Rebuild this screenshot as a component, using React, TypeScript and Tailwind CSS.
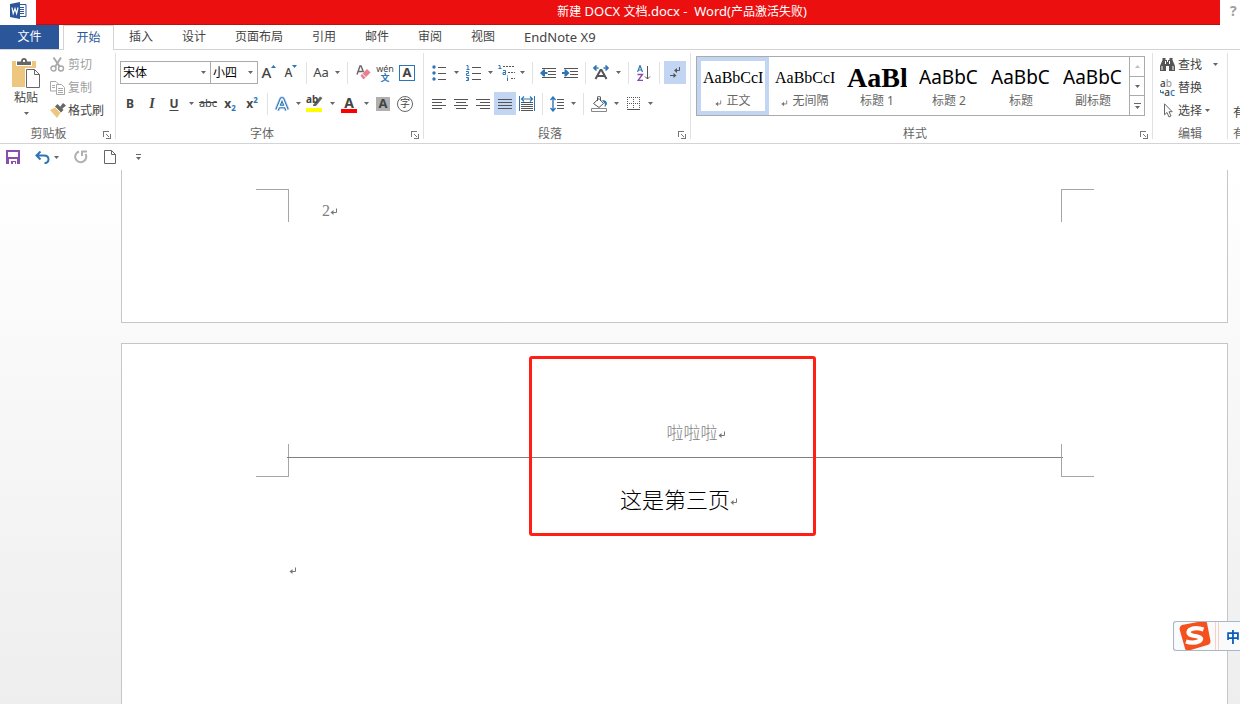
import React, { useState } from 'react';
import clsx from 'clsx';

const BLUE = '#2e75b6';
const INK = '#555555';

type StyleItem = { name: string; sample: string; sampleClass: string; mark?: boolean };

const TABS = ['插入', '设计', '页面布局', '引用', '邮件', '审阅', '视图'];

const SERIF = "font-['Liberation_Serif',serif] text-[16px]";
const SANS = "font-['Noto_Sans',sans-serif] text-[19px]";

const STYLES: StyleItem[] = [
  { name: '正文', sample: 'AaBbCcI', sampleClass: SERIF, mark: true },
  { name: '无间隔', sample: 'AaBbCcI', sampleClass: SERIF, mark: true },
  { name: '标题 1', sample: 'AaBl', sampleClass: "font-['Liberation_Serif',serif] text-[28px] font-bold" },
  { name: '标题 2', sample: 'AaBbC', sampleClass: SANS },
  { name: '标题', sample: 'AaBbC', sampleClass: SANS },
  { name: '副标题', sample: 'AaBbC', sampleClass: SANS },
];

const Caret = () => (
  <svg width="5" height="3" viewBox="0 0 5 3" className="shrink-0">
    <path d="M0 0h5L2.5 3z" fill="#666" />
  </svg>
);

const Btn = ({ label, on, wide = true, children }: { label: string; on?: boolean; wide?: boolean; children: React.ReactNode }) => (
  <button
    type="button"
    aria-label={label}
    className={clsx(
      'flex h-[23px] shrink-0 items-center justify-center hover:bg-[#d5e1f2]',
      wide ? 'w-[22px]' : 'w-5',
      on && 'bg-[#c2d5f2]'
    )}
  >
    {children}
  </button>
);

const Drop = ({ label }: { label: string }) => (
  <button type="button" aria-label={label} className="flex h-[23px] w-3 shrink-0 items-center justify-center hover:bg-[#d5e1f2]">
    <Caret />
  </button>
);

const Sep = () => <div className="mx-1 h-[22px] w-px shrink-0 bg-[#e1e1e1]" />;

const Launcher = ({ label }: { label: string }) => (
  <button type="button" aria-label={label} className="absolute right-1 bottom-0">
    <svg width="8" height="8" viewBox="0 0 8 8" fill="none" stroke="#777" shapeRendering="crispEdges">
      <path d="M0.5 6V0.5H6M3 3l3 3M7.5 3v4.5H3" />
    </svg>
  </button>
);

const Group = ({ title, launcher, className, children }: { title: string; launcher?: boolean; className: string; children: React.ReactNode }) => (
  <section className={clsx('flex shrink-0 flex-col border-r border-[#e1e1e1]', className)}>
    <div className="flex-1">{children}</div>
    <div className={clsx('relative h-4 text-center leading-[22px] text-[#666]', launcher && 'pr-[18px]')}>
      {title}
      {launcher && <Launcher label={title} />}
    </div>
  </section>
);

// paragraph end mark
const ParaMark = ({ className }: { className?: string }) => (
  <svg width="8" height="8" viewBox="0 0 8 8" fill="none" stroke="#777" className={clsx('inline-block shrink-0', className)}>
    <path d="M6.5 0.5v4H1" />
    <path d="M3.500 2L0.500 4.500L3.500 7z" fill="#777" stroke="none" />
  </svg>
);

const Lines = ({ rows }: { rows: [number, number][] }) => (
  <svg width="14" height="12" viewBox="0 0 14 12" stroke={INK} shapeRendering="crispEdges">
    {rows.map(([a, b], i) => (
      <path key={i} d={`M${a} ${i * 3 + 1.5}H${b}`} />
    ))}
  </svg>
);

const WordLogo = () => (
  <svg width="17" height="17" viewBox="0 0 17 17">
    <path d="M9 2.500h7v12H9z" fill="#fff" stroke="#2b579a" />
    <path d="M10 5.500h4M10 7.500h4M10 9.500h4M10 11.500h4" stroke="#2b579a" />
    <path d="M0 2l10-2v17L0 15z" fill="#2b579a" />
    <path d="M2 5.500l1.200 6L5 6.500l1.600 5L8 5.500" fill="none" stroke="#fff" strokeWidth="1.200" />
  </svg>
);

const PasteIcon = () => (
  <svg width="28" height="31" viewBox="0 0 28 31">
    <path d="M0 3h24v26H0z" fill="#edc77f" />
    <path d="M4 3h16v5H4z" fill="#fff" />
    <path d="M5 7V3.500h4Q9 0 12 0t3 3.500h4V7z" fill="#666" />
    <path d="M11 2h2v2h-2z" fill="#fff" />
    <path d="M13 10h11v20H13z" fill="#fff" />
    <path d="M14.500 11.500h8l5 5v13h-13z" fill="#fff" stroke="#666" />
    <path d="M22.500 11.500v5h5" fill="none" stroke="#666" />
  </svg>
);

const CutIcon = () => (
  <svg width="15" height="15" viewBox="0 0 15 15" fill="none" stroke="#a8a8a8">
    <path d="M3.500 0.500L10 10M11 0.500L5 10" strokeWidth="1.900" />
    <circle cx="3.500" cy="11.500" r="2.500" strokeWidth="1.400" />
    <circle cx="11" cy="11.500" r="2.500" strokeWidth="1.400" />
  </svg>
);

const CopyIcon = () => (
  <svg width="15" height="14" viewBox="0 0 15 14" fill="#fff" stroke="#a8a8a8">
    <path d="M0.500 0.500H6l2.500 2.500v7h-8z" />
    <path d="M2 4.500h3M2 6.500h3" />
    <path d="M6.500 3.500h5l3 3v7h-8z" />
    <path d="M8 7.500h5M8 9.500h5M8 11.500h5" />
  </svg>
);

const PainterIcon = () => (
  <svg width="16" height="15" viewBox="0 0 16 15">
    <path d="M0 7l6-3 5 5-4 6z" fill="#edc77f" />
    <path d="M5 3.500L7.500 1l6 6L11 9.500z" fill="#666" />
    <path d="M10 4l3-4 3 2.500-4 3.500z" fill="#666" />
    <path d="M5.500 4.500l5 5" stroke="#fff" />
  </svg>
);

const EraserIcon = () => (
  <svg width="15" height="15" viewBox="0 0 15 15">
    <path d="M1 9.500L4 1h1l2.500 6M2.500 6.500h4" fill="none" stroke="#666" strokeWidth="1.400" />
    <path d="M4.500 10.500L11 4l3.500 3.500L8 14H7z" fill="#e8808f" />
    <path d="M6 8.500l4 4" stroke="#fff" />
  </svg>
);

const HighlightIcon = () => (
  <svg width="18" height="17" viewBox="0 0 18 17">
    <path d="M0 13h16v4H0z" fill="#ffff00" />
    <path d="M7 10L14 1.500l2.500 1.500-6.500 8H7z" fill="#666" />
  </svg>
);

const EffectIcon = () => (
  <svg width="18" height="16" viewBox="0 0 18 16" fill="none" strokeLinejoin="round">
    <path d="M4 14L8.500 3h1L14 14M5.500 10.500h7" stroke="#c4dbf3" strokeWidth="5.500" />
    <path d="M4 14L8.500 3h1L14 14M5.500 10.500h7" stroke={BLUE} strokeWidth="3.600" />
    <path d="M4 14L8.500 3h1L14 14M5.500 10.500h7" stroke="#fff" strokeWidth="1.500" />
  </svg>
);

const BulletsIcon = () => (
  <svg width="14" height="16" viewBox="0 0 14 16">
    <g fill={BLUE}>
      <circle cx="2" cy="2" r="1.700" />
      <circle cx="2" cy="8" r="1.700" />
      <circle cx="2" cy="14" r="1.700" />
    </g>
    <path d="M6 2.500h8M6 8.500h8M6 14.500h8" stroke={INK} shapeRendering="crispEdges" />
  </svg>
);

const NumbersIcon = () => (
  <svg width="15" height="16" viewBox="0 0 15 16" fill="none">
    <path d="M6 2.500h9M6 8.500h9M6 14.500h9" stroke={INK} shapeRendering="crispEdges" />
    <path d="M0.500 0.500h1.500v4M0.500 4.500h3M0 6.500h2.500v2H0.500v2h3M0 12.500h2.500v3H0M1 14h1.500" stroke={BLUE} />
  </svg>
);

const MultiIcon = () => (
  <svg width="17" height="16" viewBox="0 0 17 16" fill="none">
    <path d="M5 1.500h11M10 7.500h7M13 13.500h4" stroke={INK} strokeDasharray="2 1" shapeRendering="crispEdges" />
    <path d="M0.500 0.500h1.500v3M0.500 3.500h3M5 5.500h2.500v4H5v-2h2.500M9.500 10.500v1M9.500 12.500v3.500" stroke={BLUE} />
  </svg>
);

const IndentIcon = ({ out }: { out?: boolean }) => (
  <svg width="16" height="12" viewBox="0 0 16 12">
    <path d="M2 1.500h14M8 4.500h8M8 7.500h8M2 10.500h14" stroke={INK} shapeRendering="crispEdges" />
    <path d={out ? 'M0 6l3.500-3.500h1.500v2.500h2.500v2H5v2.500H3.500z' : 'M7.500 6L4 2.500H2.500v2.500H0v2h2.500v2.500H4z'} fill={BLUE} />
  </svg>
);

const AsianIcon = () => (
  <svg width="17" height="15" viewBox="0 0 17 15" fill="none">
    <path d="M0.500 3h5M3.500 0.500L1 3l2.500 2.500M15.500 3h-5M12.500 0.500L15 3l-2.500 2.500" stroke={BLUE} strokeWidth="1.600" />
    <path d="M2.500 14L7.500 5h1L13.500 14M4.500 11h7" stroke={INK} strokeWidth="2" />
  </svg>
);

const SortIcon = () => (
  <svg width="14" height="16" viewBox="0 0 14 16" fill="none">
    <path d="M0.500 7L3 0.500L5.500 7M1.500 5h3" stroke={BLUE} strokeWidth="1.200" />
    <path d="M0.500 9.500h5L1 15.500h5" stroke="#8b4ba8" strokeWidth="1.300" />
    <path d="M10.500 1v13M8 11.500l2.500 2.500l2.500-2.500" stroke={INK} />
  </svg>
);

const MarksIcon = () => (
  <svg width="11" height="12" viewBox="0 0 11 12" fill="none" stroke={INK}>
    <path d="M9.500 0v3.500H5M0 8.500h5" />
    <path d="M7 1L4 3.500L7 6zM3.500 6l3 2.500l-3 2.500z" fill={INK} stroke="none" />
  </svg>
);

const DistributeIcon = () => (
  <svg width="16" height="16" viewBox="0 0 16 16" fill="none">
    <path d="M0.500 0v15M15.500 0v15" stroke={BLUE} shapeRendering="crispEdges" />
    <path d="M2.500 3h11M5 0.500L2.500 3L5 5.500M11 0.500L13.500 3L11 5.500" stroke={BLUE} strokeWidth="1.200" />
    <path d="M2 6.500h12M2 8.500h12M2 10.500h12M2 12.500h12M2 14.500h12" stroke={INK} shapeRendering="crispEdges" />
  </svg>
);

const SpacingIcon = () => (
  <svg width="14" height="16" viewBox="0 0 14 16" fill="none">
    <path d="M3 1v14M0.500 4L3 1l2.500 3M0.500 12L3 15l2.500-3" stroke={BLUE} strokeWidth="1.400" />
    <path d="M7 3.500h7M7 6.500h7M7 9.500h7M7 12.500h7" stroke={INK} shapeRendering="crispEdges" />
  </svg>
);

const ShadingIcon = () => (
  <svg width="17" height="16" viewBox="0 0 17 16" fill="none">
    <path d="M2.500 7.500L8 2.500l4.500 5L8 11.500zM6.500 5V2q0-2 1.500-2t1.500 2v3" stroke={INK} />
    <path d="M11 4q5 0 5 4l-2 3q-1-1 0-3z" fill={BLUE} />
    <path d="M0.500 12.500h15v3h-15z" stroke="#888" />
  </svg>
);

const BorderIcon = () => (
  <svg width="13" height="13" viewBox="0 0 13 13" fill="none" stroke={INK} shapeRendering="crispEdges">
    <path d="M0 0.500h13M0 6.500h13M0.500 0v12M6.500 0v12M12.500 0v12" strokeDasharray="1 1" />
    <path d="M0 12.500h13" />
  </svg>
);

const FindIcon = () => (
  <svg width="15" height="13" viewBox="0 0 15 13" fill="#555">
    <path d="M2.500 0h3v2H7v2h1V2h1.500V0h3v2l2.500 6v5H9V8H6v5H0V8l2.500-6z" />
    <path d="M2 8v4M13 8v4M5.500 3v3M9.500 3v3" stroke="#fff" />
  </svg>
);

const SogouIcon = () => (
  <svg width="32" height="30" viewBox="0 0 32 30">
    <path d="M3 4L24 0q3-1 4 2L31.500 20q0 3-3 4L10 29.500q-3 1-4-2L0.500 8q0-3 2.500-4z" fill="#f4511e" />
    <path d="M24.500 8.500Q16 5.500 10.500 9q-3 4 3 5.500l5 1q6 1.500 2 4.500-6 3-13.500 0.500" fill="none" stroke="#fff" strokeWidth="4.200" />
  </svg>
);

const ClipboardGroup = () => (
  <Group title="剪贴板" launcher className="w-[116px]">
    <div className="flex">
      <button type="button" className="flex w-[50px] flex-col items-center pt-[5px] pl-0.5">
        <PasteIcon />
        <span className="leading-[18px]">粘贴</span>
        <span className="flex h-3 items-center">
          <Caret />
        </span>
      </button>
      <div className="flex flex-col">
        <button type="button" disabled className="flex h-[23px] items-center gap-[3px] text-[#a0a0a0]">
          <CutIcon />
          剪切
        </button>
        <button type="button" disabled className="flex h-[23px] items-center gap-[3px] text-[#a0a0a0]">
          <CopyIcon />
          复制
        </button>
        <button type="button" className="flex h-[23px] items-center gap-0.5">
          <PainterIcon />
          格式刷
        </button>
      </div>
    </div>
  </Group>
);

const Combo = ({ label, options, className }: { label: string; options: string[]; className: string }) => (
  <div className={clsx('relative flex h-[23px] items-center border border-[#ababab]', className)}>
    <select aria-label={label} className="h-full w-full appearance-none bg-transparent pl-0.5 text-[12px] text-black outline-none">
      {options.map((o) => (
        <option key={o}>{o}</option>
      ))}
    </select>
    <span className="pointer-events-none absolute right-1 flex">
      <Caret />
    </span>
  </div>
);

const FontGroup = () => (
  <Group title="字体" launcher className="w-[308px] pl-[3px]">
    <div className="flex h-[31px] items-center pt-2 pl-px">
      <Combo label="字体名称" options={['宋体', '黑体', '楷体']} className="w-[91px]" />
      <Combo label="字号" options={['小四', '四号', '五号']} className="w-[47px] border-l-0" />
      <Btn label="增大字号">
        <span className="text-[15px] font-medium">A</span>
        <svg width="5" height="3" viewBox="0 0 5 3" className="mb-3"><path d="M0 3h5L2.500 0z" fill={BLUE} /></svg>
      </Btn>
      <Btn label="减小字号">
        <span className="text-[12px] font-medium">A</span>
        <svg width="5" height="3" viewBox="0 0 5 3" className="mb-3"><path d="M0 0h5L2.500 3z" fill={BLUE} /></svg>
      </Btn>
      <Sep />
      <Btn label="更改大小写" wide={false}>
        <span className="text-[13px]">Aa</span>
      </Btn>
      <Drop label="大小写选项" />
      <Sep />
      <Btn label="清除格式"><EraserIcon /></Btn>
      <Btn label="拼音指南">
        <span className="flex flex-col items-center">
          <span className="text-[9px] leading-[9px]">wén</span>
          <span className="text-[9px] leading-[9px] font-bold text-[#2e75b6]">文</span>
        </span>
      </Btn>
      <Btn label="字符边框">
        <span className="flex size-4 items-center justify-center border border-[#2e75b6] text-[13px] font-bold">A</span>
      </Btn>
    </div>
    <div className="flex h-[31px] items-center pt-2">
      <Btn label="加粗"><span className="font-bold">B</span></Btn>
      <Btn label="倾斜"><span className="font-['Liberation_Serif',serif] text-[14px] font-bold italic">I</span></Btn>
      <Btn label="下划线"><span className="font-bold underline underline-offset-2">U</span></Btn>
      <Drop label="下划线选项" />
      <Btn label="删除线"><span className="text-[11px] line-through">abc</span></Btn>
      <Btn label="下标">
        <span className="font-bold">x</span>
        <span className="pt-2 text-[8px] font-bold text-[#2e75b6]">2</span>
      </Btn>
      <Btn label="上标">
        <span className="font-bold">x</span>
        <span className="pb-2 text-[8px] font-bold text-[#2e75b6]">2</span>
      </Btn>
      <Sep />
      <Btn label="文本效果" wide={false}><EffectIcon /></Btn>
      <Drop label="文本效果选项" />
      <Btn label="突出显示">
        <span className="relative flex">
          <span className="absolute top-0 left-0 text-[10px] leading-[9px] font-bold">ab</span>
          <HighlightIcon />
        </span>
      </Btn>
      <Drop label="突出显示颜色" />
      <Btn label="字体颜色">
        <span className="mt-0.5 flex w-4 flex-col items-center border-b-4 border-[#ff0000] text-[14px] leading-3 font-bold">A</span>
      </Btn>
      <Drop label="字体颜色选项" />
      <Btn label="字符底纹">
        <span className="flex size-[14px] items-center justify-center bg-[#b0b0b0] text-[13px] font-bold">A</span>
      </Btn>
      <Btn label="带圈字符">
        <span className="flex size-4 items-center justify-center rounded-full border border-[#666] text-[10px]">字</span>
      </Btn>
    </div>
  </Group>
);

const ParagraphGroup = () => (
  <Group title="段落" launcher className="w-[267px] pl-1">
    <div className="flex h-[31px] items-center pt-2">
      <Btn label="项目符号"><BulletsIcon /></Btn>
      <Drop label="项目符号选项" />
      <Btn label="编号"><NumbersIcon /></Btn>
      <Drop label="编号选项" />
      <Btn label="多级列表" wide={false}><MultiIcon /></Btn>
      <Drop label="多级列表选项" />
      <Sep />
      <Btn label="减少缩进量"><IndentIcon out /></Btn>
      <Btn label="增加缩进量"><IndentIcon /></Btn>
      <Sep />
      <Btn label="中文版式"><AsianIcon /></Btn>
      <Drop label="中文版式选项" />
      <Sep />
      <Btn label="排序"><SortIcon /></Btn>
      <Sep />
      <Btn label="显示编辑标记" on><MarksIcon /></Btn>
    </div>
    <div className="flex h-[31px] items-center pt-2">
      <Btn label="左对齐"><Lines rows={[[0, 14], [0, 10], [0, 14], [0, 10]]} /></Btn>
      <Btn label="居中"><Lines rows={[[0, 14], [2, 12], [0, 14], [2, 12]]} /></Btn>
      <Btn label="右对齐"><Lines rows={[[0, 14], [4, 14], [0, 14], [4, 14]]} /></Btn>
      <Btn label="两端对齐" on><Lines rows={[[0, 14], [0, 14], [0, 14], [0, 14]]} /></Btn>
      <Btn label="分散对齐"><DistributeIcon /></Btn>
      <Sep />
      <Btn label="行距" wide={false}><SpacingIcon /></Btn>
      <Drop label="行距选项" />
      <Sep />
      <Btn label="底纹"><ShadingIcon /></Btn>
      <Drop label="底纹选项" />
      <Btn label="边框"><BorderIcon /></Btn>
      <Drop label="边框选项" />
    </div>
  </Group>
);

const StylesGroup = () => {
  const [active, setActive] = useState(0);
  return (
    <Group title="样式" launcher className="w-[462px] pl-[5px]">
      <div className="mt-[3px] mr-[7px] flex h-[60px] border border-[#ababab]">
        {STYLES.map((s, i) => (
          <button
            key={i}
            type="button"
            onClick={() => setActive(i)}
            className={clsx(
              'flex w-[72px] shrink-0 flex-col items-center border-4 pt-[3px]',
              i === active ? 'border-[#c2d5f2]' : 'border-transparent'
            )}
          >
            <span className={clsx('flex h-7 w-[60px] items-center overflow-hidden whitespace-nowrap text-black', s.sampleClass)}>
              {s.sample}
            </span>
            <span className="flex items-center gap-1 leading-5 whitespace-nowrap text-[#666]">
              {s.mark && <ParaMark className="mt-1 size-[7px]" />}
              {s.name}
            </span>
          </button>
        ))}
        <div className="flex flex-1 flex-col divide-y divide-[#ababab] border-l border-[#ababab]">
          <button type="button" aria-label="上一行" className="flex flex-1 items-center justify-center">
            <svg width="5" height="3" viewBox="0 0 5 3"><path d="M0 3h5L2.500 0z" fill="#c0c0c0" /></svg>
          </button>
          <button type="button" aria-label="下一行" className="flex flex-1 items-center justify-center"><Caret /></button>
          <button type="button" aria-label="其他" className="flex flex-1 flex-col items-center justify-center gap-0.5">
            <span className="h-px w-[7px] bg-[#666]" />
            <Caret />
          </button>
        </div>
      </div>
    </Group>
  );
};

const EditGroup = () => (
  <Group title="编辑" className="w-[75px]">
    <div className="flex flex-col pl-[7px]">
      <button type="button" className="flex h-[23px] items-center gap-[3px]">
        <FindIcon />
        查找
        <span className="pl-2"><Caret /></span>
      </button>
      <button type="button" className="flex h-[23px] items-center gap-[3px]">
        <span className="flex w-[15px] flex-col text-[10px] leading-[9px] font-medium">
          <span className="text-left">a<span className="text-[#a0a0a0]">b</span></span>
          <span className="flex items-center justify-end">
            <svg width="4" height="5" viewBox="0 0 4 5" fill="none" stroke={BLUE}><path d="M0.500 0v2.500H4M2.500 1L4 2.500L2.500 4" /></svg>
            a<span className="text-[#2e75b6]">c</span>
          </span>
        </span>
        替换
      </button>
      <button type="button" className="flex h-[23px] items-center gap-[3px]">
        <svg width="15" height="15" viewBox="0 0 15 15" fill="#fff" stroke="#666">
          <path d="M4.500 0.800v11l2.500-2.300l2 4.500l2-1l-2-4.300h3.200z" />
        </svg>
        选择
        <Caret />
      </button>
    </div>
  </Group>
);

const QuickAccess = () => (
  <div className="flex h-[26px] items-center pl-1.5">
    <button type="button" aria-label="保存" className="mr-[15px]">
      <svg width="14" height="14" viewBox="0 0 14 14">
        <path d="M0 0h14v14H0z" fill="#8a4fad" />
        <path d="M2 2h10v5H2zM3 9h8v5H3z" fill="#fff" />
        <path d="M5 11h2v3H5zM7 11h3v1H7zM9 11h1v3H9z" fill="#8a4fad" />
      </svg>
    </button>
    <button type="button" aria-label="撤消">
      <svg width="15" height="13" viewBox="0 0 15 13" fill="none" stroke={BLUE} strokeWidth="2">
        <path d="M5.500 0.500L1.500 4.500L5.500 8.500M1.500 4.500H9q4.500 0 4.500 4q0 3-4 4" />
      </svg>
    </button>
    <Drop label="撤消选项" />
    <button type="button" aria-label="重复" className="mr-4 ml-3">
      <svg width="14" height="14" viewBox="0 0 14 14" fill="none" stroke="#b0b0b0" strokeWidth="2">
        <path d="M5 1.500A5.500 5.500 0 1 0 11.500 4M8 1v5M7.500 1.500H13" />
      </svg>
    </button>
    <button type="button" aria-label="新建" className="mr-5">
      <svg width="12" height="14" viewBox="0 0 12 14" fill="none" stroke="#666">
        <path d="M0.500 0.500h7l4 4v9h-11zM7.500 0.500v4h4" />
      </svg>
    </button>
    <button type="button" aria-label="自定义快速访问工具栏" className="flex flex-col items-center gap-0.5">
      <span className="h-px w-[5px] bg-[#666]" />
      <Caret />
    </button>
  </div>
);

const CORNER = 'size-[33px] shrink-0 border-[#a6a6a6]';

const PageTwo = () => (
  <article className="h-[153px] border-x border-b border-[#c6c6c6] bg-white pt-[19px] pr-[133px] pl-[134px]">
    <div className="flex">
      <div className={clsx(CORNER, 'border-t border-r')} />
      <p className="flex flex-1 items-center pt-[10px] pl-[33px] font-['Liberation_Serif',serif] text-[16px] text-[#7f7f7f]">
        2<ParaMark className="mt-0.5" />
      </p>
      <div className={clsx(CORNER, 'border-t border-l')} />
    </div>
  </article>
);

const PageThree = () => (
  <article className="relative mt-5 flex-1 border-x border-t border-[#c6c6c6] bg-white pr-[133px] pl-[134px]">
    <header className="flex items-end">
      <div className={clsx(CORNER, 'border-r border-b')} />
      <div className="-mx-0.5 mb-[19px] flex flex-1 items-center justify-center border-b border-[#7f7f7f] pt-[77px] pb-3 pl-[42px] text-[17px] leading-6 font-light text-[#7f7f7f]">
        啦啦啦<ParaMark className="mt-1" />
      </div>
      <div className={clsx(CORNER, 'border-b border-l')} />
    </header>
    <div className="px-[33px]">
      <p className="flex items-center justify-center pt-1.5 pl-2 text-[22px] leading-8 font-light text-black">
        这是第三页<ParaMark className="mt-1.5" />
      </p>
      <p className="mt-11 flex h-6 items-center">
        <ParaMark />
      </p>
    </div>
    <div className="pointer-events-none absolute top-3 left-[407px] h-[180px] w-[287px] rounded-[3px] border-[3px] border-[#ff1f14]" />
  </article>
);

const InputMethodBar = () => (
  <div className="fixed right-0 bottom-[53px] flex h-[30px] w-[67px] items-center overflow-hidden rounded-l-[3px] border-y border-l border-[#a9b8c6] bg-[#f8fafc]">
    <span className="shrink-0 pl-[5px]"><SogouIcon /></span>
    <span className="ml-1 h-full w-1 shrink-0 border-x border-[#f9d0c0]" />
    <button type="button" className="shrink-0 pl-[7px] text-[14px] font-bold text-[#0b5cb8]">中</button>
  </div>
);

export default function App() {
  return (
    <div className="flex min-h-screen flex-col overflow-hidden bg-white font-['Noto_Sans','Noto_Sans_CJK_SC',sans-serif] text-[12px] text-[#444]">
      <header className="flex h-[25px]">
        <div className="flex w-9 items-center justify-center pb-1"><WordLogo /></div>
        <h1 className="flex flex-1 items-center justify-center border-b border-[#c00d0d] bg-[#eb0f0f] pl-[108px] whitespace-pre text-white">
          新建<span className="text-[13px]"> DOCX </span>文档<span className="text-[13px]">.docx -  Word(</span>产品激活失败<span className="text-[13px]">)</span>
        </h1>
        <button type="button" aria-label="帮助" className="w-5 overflow-hidden pb-1 pl-2.5 text-left text-[14px] font-bold text-[#a0a0a0]">?</button>
      </header>

      <nav className="flex h-[25px] border-b border-[#d4d4d4] leading-6">
        <button type="button" className="mr-1 w-[59px] bg-[#2b579a] text-white">文件</button>
        <button type="button" className="-mb-px w-[51px] border-x border-t border-[#d4d4d4] bg-white leading-[22px] text-[#2b579a]">开始</button>
        <div className="flex gap-[29px] pl-[15px]">
          {TABS.map((t) => (
            <button key={t} type="button" className="whitespace-nowrap">{t}</button>
          ))}
          <button type="button" className="text-[13px] whitespace-nowrap">EndNote X9</button>
        </div>
      </nav>

      <div className="flex h-[94px] border-b border-[#d4d4d4] pt-[3px] pb-1">
        <ClipboardGroup />
        <FontGroup />
        <ParagraphGroup />
        <StylesGroup />
        <EditGroup />
        <div className="flex flex-1 flex-col justify-end overflow-hidden pl-[5px] whitespace-nowrap">
          <span className="mb-[5px] h-4 leading-[22px]">有</span>
          <span className="h-4 leading-[22px] text-[#666]">有</span>
        </div>
      </div>

      <QuickAccess />

      <main className="flex flex-1 flex-col bg-linear-to-b from-white to-[#eeeeee] pr-3 pl-[121px]">
        <PageTwo />
        <PageThree />
      </main>

      <InputMethodBar />
    </div>
  );
}
